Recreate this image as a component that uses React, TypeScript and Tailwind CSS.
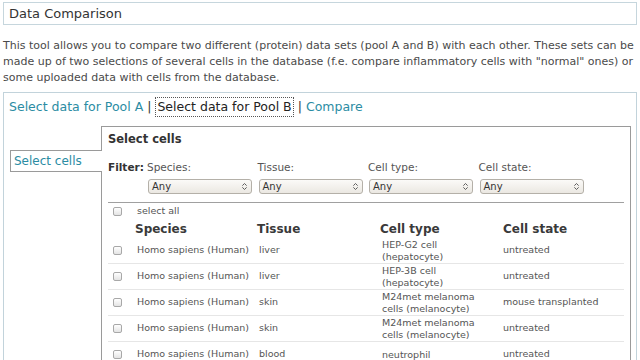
import { ChevronsUpDown } from "lucide-react";

const rows = [
  { species: "Homo sapiens (Human)", tissue: "liver", type: ["HEP-G2 cell", "(hepatocyte)"], state: "untreated" },
  { species: "Homo sapiens (Human)", tissue: "liver", type: ["HEP-3B cell", "(hepatocyte)"], state: "untreated" },
  { species: "Homo sapiens (Human)", tissue: "skin", type: ["M24met melanoma", "cells (melanocyte)"], state: "mouse transplanted" },
  { species: "Homo sapiens (Human)", tissue: "skin", type: ["M24met melanoma", "cells (melanocyte)"], state: "untreated" },
  { species: "Homo sapiens (Human)", tissue: "blood", type: ["neutrophil"], state: "untreated" },
];

const filters = ["Species:", "Tissue:", "Cell type:", "Cell state:"];

function Checkbox() {
  return (
    <span className="block w-[9px] h-[9px] rounded-[2px] border border-[#a8a8a8] bg-gradient-to-b from-white to-[#e4e4e4]" />
  );
}

function FakeSelect() {
  return (
    <div className="ml-px flex h-[15px] w-[104px] items-center justify-between rounded-[3px] border border-[#b4b0a8] bg-gradient-to-b from-[#fbfaf8] to-[#ebe8e2] pl-[3px] pr-[2px] text-[10px] leading-none text-[#333]">
      <span>Any</span>
      <ChevronsUpDown size={9} strokeWidth={2.5} className="text-[#555]" />
    </div>
  );
}

export default function App() {
  return (
    <div className="w-[640px] h-[360px] overflow-hidden bg-white text-[#333] font-['DejaVu_Sans',sans-serif]">
      <div className="mx-[3px] mt-[2px] h-[23px] border border-[#c6d6dd] px-[5px] text-[13px] leading-[21px]">
        Data Comparison
      </div>

      <p className="mt-[13px] px-[3px] text-[11px] leading-[16px] text-[#4a4a4a]">
        This tool allows you to compare two different (protein) data sets (pool A and B) with each other. These sets can be
        made up of two selections of several cells in the database (f.e. compare inflammatory cells with "normal" ones) or
        some uploaded data with cells from the database.
      </p>

      <div className="mx-[3px] mt-[6px] h-[300px] border border-[#c2d3db]">
        <div className="flex items-center pl-[5px] pt-[4px] text-[12.5px] leading-[18px]">
          <span className="text-[#2b8ca3]">Select data for Pool A</span>
          <span className="px-[4px] text-[#333]">|</span>
          <span className="border border-dotted border-[#555] px-px text-[#222]">Select data for Pool B</span>
          <span className="px-[4px] text-[#333]">|</span>
          <span className="text-[#2b8ca3]">Compare</span>
        </div>

        <div className="mt-[9px] flex">
          <div className="relative z-10 -mr-px w-[98px] flex-none pt-[24px]">
            <div className="ml-[6px] h-[22px] w-[92px] border border-r-0 border-[#9a9a9a] bg-white pl-[3px] text-[12px] leading-[20px] text-[#2b8ca3]">
              Select cells
            </div>
          </div>

          <div className="mr-[5px] h-[260px] flex-1 border border-b-0 border-[#9a9a9a] px-[6px]">
            <div className="pt-[4px] text-[11.5px] font-bold leading-[16px] text-[#333]">Select cells</div>

            <div className="mt-[13px] flex text-[10.5px] leading-[14px]">
              <div className="w-[39px] flex-none font-bold text-[#333]">Filter:</div>
              {filters.map((f) => (
                <div key={f} className="w-[110.5px] flex-none">
                  <div className="text-[#555]">{f}</div>
                  <div className="mt-[5px]">
                    <FakeSelect />
                  </div>
                </div>
              ))}
            </div>

            <div className="mt-[8px] border-t border-[#a0a0a0]" />

            <div className="grid grid-cols-[27px_122px_123px_123px_1fr] text-[9.5px] text-[#555]">
              <div className="flex h-[17px] items-center pl-[5px]">
                <Checkbox />
              </div>
              <div className="col-span-4 flex h-[17px] items-center pl-[2px]">select all</div>

              <div className="h-[18px]" />
              <div className="flex h-[18px] items-center text-[12px] font-bold text-[#3a3a3a]">Species</div>
              <div className="flex h-[18px] items-center text-[12px] font-bold text-[#3a3a3a]">Tissue</div>
              <div className="flex h-[18px] items-center text-[12px] font-bold text-[#3a3a3a]">Cell type</div>
              <div className="flex h-[18px] items-center text-[12px] font-bold text-[#3a3a3a]">Cell state</div>

              {rows.map((r, i) => (
                <div key={i} className="contents">
                  <div className="flex h-[26px] items-center border-b border-[#e6e6e6] pl-[5px]">
                    <Checkbox />
                  </div>
                  <div className="flex h-[26px] items-center border-b border-[#e6e6e6] pl-[2px]">{r.species}</div>
                  <div className="flex h-[26px] items-center border-b border-[#e6e6e6] pl-[2px]">{r.tissue}</div>
                  <div className="flex h-[26px] flex-col justify-center border-b border-[#e6e6e6] pl-[2px] leading-[12px]">
                    {r.type.map((t) => (
                      <span key={t}>{t}</span>
                    ))}
                  </div>
                  <div className="flex h-[26px] items-center border-b border-[#e6e6e6]">{r.state}</div>
                </div>
              ))}
            </div>
          </div>
        </div>
      </div>
    </div>
  );
}
